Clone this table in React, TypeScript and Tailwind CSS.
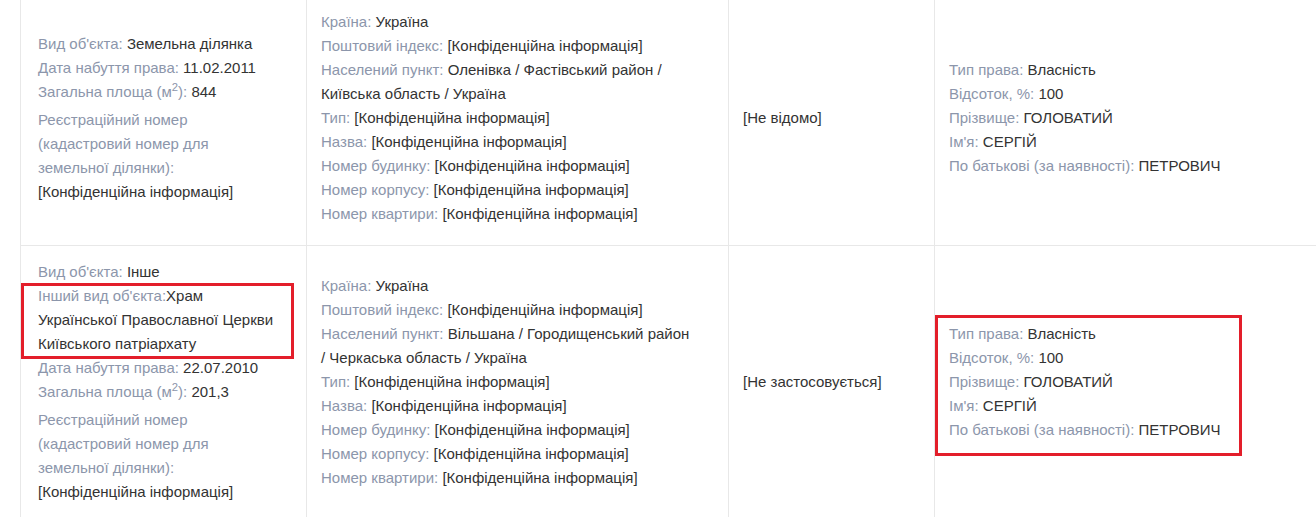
type Field = { label: string; value: string; sep?: string }

type Row = {
  height: string
  object: Field[]
  objectExtra?: Field
  objectAfter: Field[]
  area: string
  address: Field[]
  status: string
  rights: Field[]
  highlightRights?: boolean
}

const CONF = "[Конфіденційна інформація]"

const rights: Field[] = [
  { label: "Тип права", value: "Власність" },
  { label: "Відсоток, %", value: "100" },
  { label: "Прізвище", value: "ГОЛОВАТИЙ" },
  { label: "Ім'я", value: "СЕРГІЙ" },
  { label: "По батькові (за наявності)", value: "ПЕТРОВИЧ" },
]

const rows: Row[] = [
  {
    height: "h-[254px]",
    object: [{ label: "Вид об'єкта", value: "Земельна ділянка" }],
    objectAfter: [{ label: "Дата набуття права", value: "11.02.2011" }],
    area: "844",
    address: [
      { label: "Країна", value: "Україна" },
      { label: "Поштовий індекс", value: CONF },
      { label: "Населений пункт", value: "Оленівка / Фастівський район / Київська область / Україна" },
      { label: "Тип", value: CONF },
      { label: "Назва", value: CONF },
      { label: "Номер будинку", value: CONF },
      { label: "Номер корпусу", value: CONF },
      { label: "Номер квартири", value: CONF },
    ],
    status: "[Не відомо]",
    rights,
  },
  {
    height: "h-[274px]",
    object: [{ label: "Вид об'єкта", value: "Інше" }],
    objectExtra: { label: "Інший вид об'єкта", value: "Храм Української Православної Церкви Київського патріархату", sep: ":" },
    objectAfter: [{ label: "Дата набуття права", value: "22.07.2010" }],
    area: "201,3",
    address: [
      { label: "Країна", value: "Україна" },
      { label: "Поштовий індекс", value: CONF },
      { label: "Населений пункт", value: "Вільшана / Городищенський район / Черкаська область / Україна" },
      { label: "Тип", value: CONF },
      { label: "Назва", value: CONF },
      { label: "Номер будинку", value: CONF },
      { label: "Номер корпусу", value: CONF },
      { label: "Номер квартири", value: CONF },
    ],
    status: "[Не застосовується]",
    rights,
    highlightRights: true,
  },
]

function Line({ f }: { f: Field }) {
  return (
    <div>
      <span className="text-[#8c96ab]">{f.label}{f.sep ?? ": "}</span>
      {f.value}
    </div>
  )
}

function Highlight({ className }: { className: string }) {
  return <span className={`pointer-events-none absolute border-[3px] border-[#e31e2a] ${className}`} />
}

export default function App() {
  return (
    <div
      className="min-h-[517px] overflow-hidden bg-white pl-5 text-[15px] leading-6 text-[#333]"
      style={{ fontFamily: '"Liberation Sans", Arial, sans-serif' }}
    >
      <table className="-mt-[9px] w-[1310px] table-fixed border-collapse">
        <colgroup>
          <col className="w-[286px]" />
          <col className="w-[422px]" />
          <col className="w-[206px]" />
          <col />
        </colgroup>
        <tbody>
          {rows.map((r, i) => (
            <tr key={i} className={`${r.height} border-b border-[#e8e8e8]`}>
              <td className="border-x border-[#e8e8e8] pl-[17px] align-middle">
                <div className="w-[238px]">
                  {r.object.map((f) => <Line key={f.label} f={f} />)}
                  {r.objectExtra && (
                    <div className="relative">
                      <Line f={r.objectExtra} />
                      <Highlight className="-left-[17px] -top-[1px] h-[76px] w-[273px]" />
                    </div>
                  )}
                  {r.objectAfter.map((f) => <Line key={f.label} f={f} />)}
                  <div>
                    <span className="text-[#8c96ab]">Загальна площа (м<sup>2</sup>): </span>
                    {r.area}
                  </div>
                  <div className="mt-1">
                    <div className="text-[#8c96ab]">Реєстраційний номер (кадастровий номер для земельної ділянки):</div>
                    <div>{CONF}</div>
                  </div>
                </div>
              </td>
              <td className="border-x border-[#e8e8e8] pl-[14px] align-middle">
                <div className="w-[370px]">
                  {r.address.map((f) => <Line key={f.label} f={f} />)}
                </div>
              </td>
              <td className="border-x border-[#e8e8e8] pl-[14px] align-middle">{r.status}</td>
              <td className="border-l border-[#e8e8e8] pl-[14px] align-middle">
                <div className="relative inline-block">
                  {r.rights.map((f) => <Line key={f.label} f={f} />)}
                  {r.highlightRights && <Highlight className="-left-[14px] -top-[7px] h-[141px] w-[307px]" />}
                </div>
              </td>
            </tr>
          ))}
        </tbody>
      </table>
    </div>
  )
}
